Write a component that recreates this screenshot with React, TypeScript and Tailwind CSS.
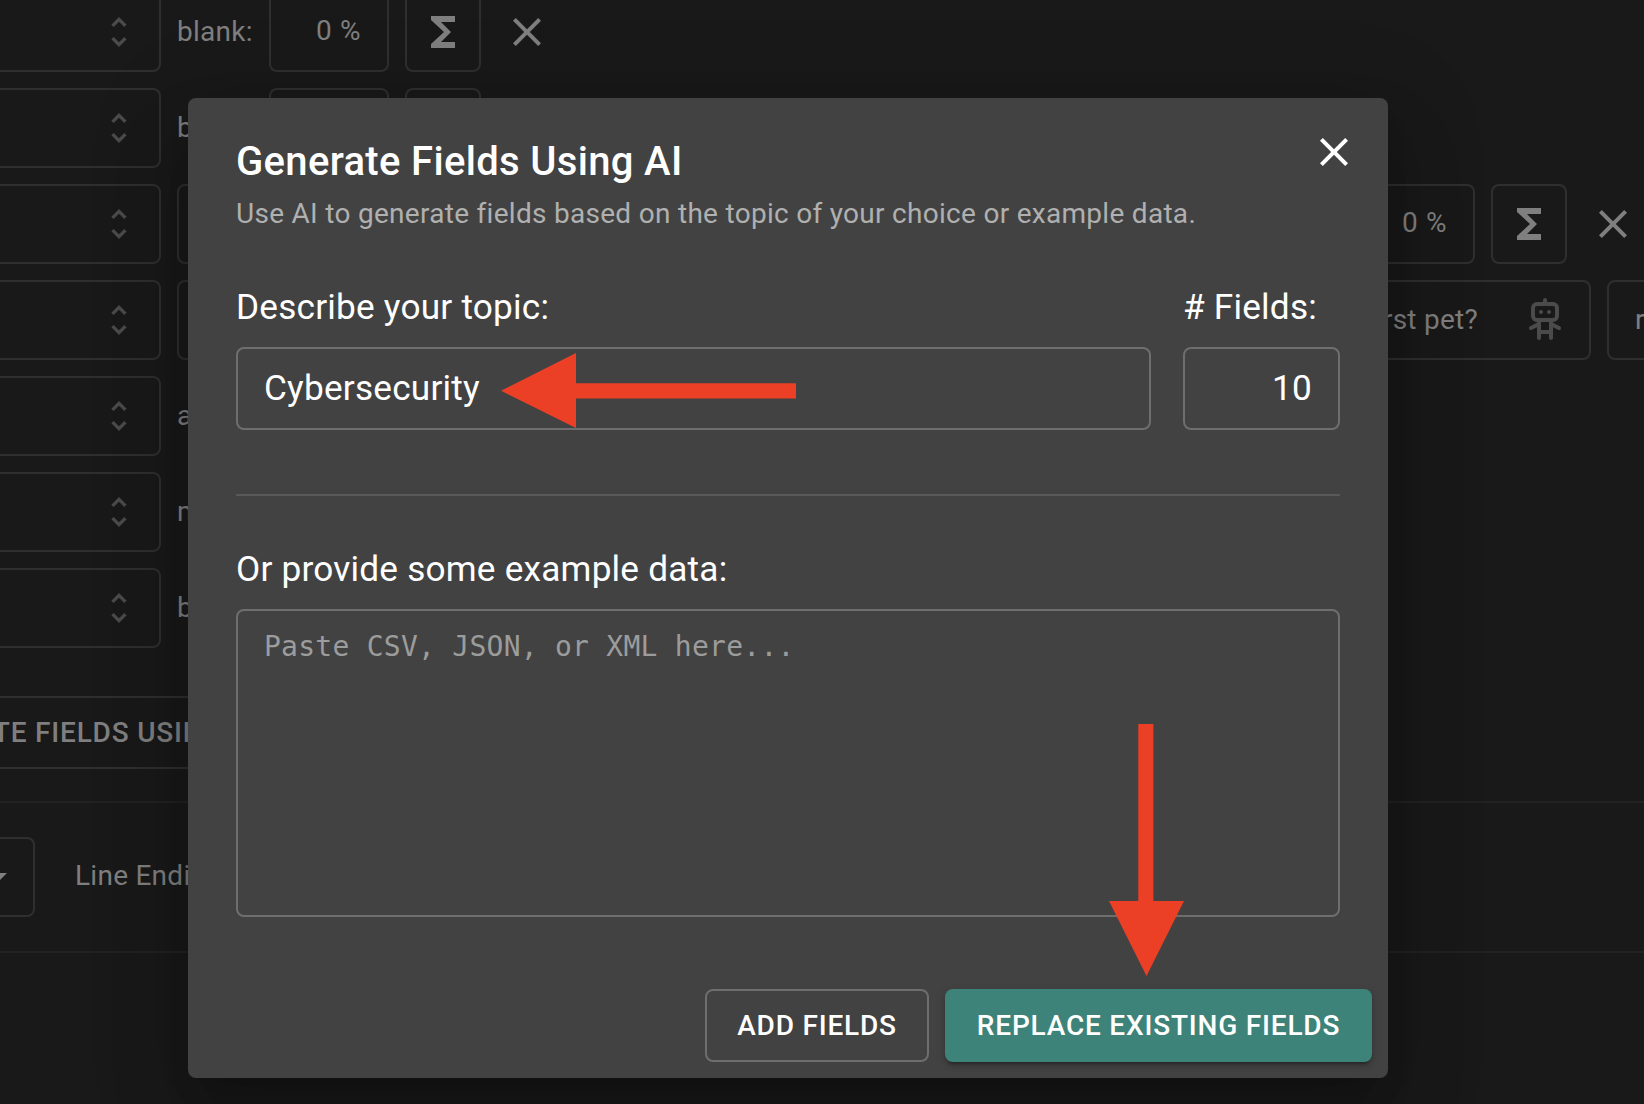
import React from "react";

const font = "font-[Roboto,sans-serif]";

function FunctionsIcon() {
  return (
    <svg viewBox="0 0 24 24" className="h-12 w-12 fill-current">
      <path d="M18 4H6v2l6.5 6L6 18v2h12v-3h-7l5-5-5-5h7z" />
    </svg>
  );
}

function CloseIcon() {
  return (
    <svg viewBox="0 0 24 24" className="h-12 w-12 fill-current">
      <path d="M19 6.41 17.59 5 12 10.59 6.41 5 5 6.41 10.59 12 5 17.59 6.41 19 12 13.41 17.59 19 19 17.59 13.41 12z" />
    </svg>
  );
}

function UnfoldIcon() {
  return (
    <svg viewBox="0 0 24 24" className="h-10 w-10 fill-[#4b4b4b]">
      <path d="M12 5.83 15.17 9l1.41-1.41L12 3 7.41 7.59 8.83 9 12 5.83zm0 12.34L8.83 15l-1.41 1.41L12 21l4.59-4.59L15.17 15 12 18.17z" />
    </svg>
  );
}

function RobotIcon() {
  return (
    <svg
      viewBox="0 0 24 24"
      className="h-12 w-12 fill-none stroke-[#4b4b4b] stroke-2"
      strokeLinecap="round"
      strokeLinejoin="round"
    >
      <path d="M6 6a2 2 0 0 1 2-2h8a2 2 0 0 1 2 2v4a2 2 0 0 1-2 2H8a2 2 0 0 1-2-2z" />
      <path d="M12 2v2M9 12v9M15 12v9M5 16l4-2M15 14l4 2M9 18h6M10 8v.01M14 8v.01" />
    </svg>
  );
}

const box = "h-20 shrink-0 rounded-lg border-2 border-[#2f2f2f]";

function PercentBox() {
  return (
    <div className={`${box} flex w-[120px] items-center justify-end pr-[26px] pb-0.5 tracking-[0.6px]`}>0 %</div>
  );
}

function SigmaButton() {
  return (
    <div className={`${box} flex w-[76px] items-center justify-center`}>
      <FunctionsIcon />
    </div>
  );
}

function FieldRow({ children }: { children: React.ReactNode }) {
  return (
    <div className="flex h-20 items-center gap-4 whitespace-nowrap">
      <div className={`${box} flex w-[161px] items-center justify-end rounded-l-none border-l-0 pr-5`}>
        <UnfoldIcon />
      </div>
      {children}
    </div>
  );
}

function BlankRow() {
  return (
    <FieldRow>
      <span className="w-[76px]">blank:</span>
      <PercentBox />
      <SigmaButton />
      <div className="ml-[6px]">
        <CloseIcon />
      </div>
    </FieldRow>
  );
}

function Page() {
  return (
    <div className="flex h-full w-full flex-col overflow-hidden bg-[#191919] text-[28px] tracking-[0.26px] text-[#7f7f7f]">
      <div className="-mt-2 flex flex-col gap-4">
        <BlankRow />
        <BlankRow />
        <FieldRow>
          <div className={`${box} w-[1162px]`} />
          <PercentBox />
          <SigmaButton />
          <div className="ml-[6px]">
            <CloseIcon />
          </div>
        </FieldRow>
        <FieldRow>
          <div className={`${box} flex w-[1414px] items-center justify-between pr-5`}>
            <span className="w-[1299px] text-right">What was the name of your first pet?</span>
            <RobotIcon />
          </div>
          <div className={`${box} flex w-[300px] items-center pl-[26px]`}>random</div>
        </FieldRow>
        <FieldRow>
          <span>at least</span>
        </FieldRow>
        <FieldRow>
          <span>min:</span>
        </FieldRow>
        <FieldRow>
          <span>between</span>
        </FieldRow>
      </div>
      <div className="mt-12 flex h-[73px] w-[560px] shrink-0 items-center border-y-2 border-[#2f2f2f] font-medium tracking-[0.8px] whitespace-nowrap">
        <span className="-ml-[117px]">GENERATE FIELDS USING AI...</span>
      </div>
      <div className="mt-8 flex h-[152px] shrink-0 items-center gap-10 border-y-2 border-[#222222]">
        <div className={`${box} flex w-[35px] items-center rounded-l-none border-l-0`}>
          <svg viewBox="0 0 24 24" className="-ml-[27px] h-12 w-12 shrink-0 fill-current">
            <path d="M7 10l5 5 5-5z" />
          </svg>
        </div>
        <span className="pb-0.5 whitespace-nowrap">Line Ending:</span>
      </div>
    </div>
  );
}

function Dialog() {
  return (
    <div className="absolute top-[98px] left-[188px] flex h-[980px] w-[1200px] flex-col rounded-lg bg-[#424242] px-12 pt-[39px] pb-4 text-white shadow-[0_22px_30px_-14px_rgba(0,0,0,0.2),0_48px_76px_6px_rgba(0,0,0,0.14),0_18px_92px_16px_rgba(0,0,0,0.12)]">
      <div className="flex h-[93px] justify-between">
        <div>
          <h1 className="text-[40px] leading-[50px] font-medium tracking-[0.33px]">Generate Fields Using AI</h1>
          <p className="mt-1.5 text-[28px] leading-[42px] tracking-[0.29px] text-[#b0b0b0]">
            Use AI to generate fields based on the topic of your choice or example data.
          </p>
        </div>
        <button className="-mt-[9px] -mr-[18px] h-12 w-12">
          <CloseIcon />
        </button>
      </div>

      <div className="mt-[52px] flex gap-8 text-[35.2px] tracking-[0.21px]">
        <label className="flex w-[915px] flex-col">
          <span className="leading-[50px]">Describe your topic:</span>
          <span className="mt-[15px] flex h-[83px] items-center rounded-lg border-2 border-[#6e6e6e] pl-[26px]">
            Cybersecurity
          </span>
        </label>
        <label className="flex w-[157px] flex-col">
          <span className="leading-[50px]"># Fields:</span>
          <span className="mt-[15px] flex h-[83px] items-center justify-end rounded-lg border-2 border-[#6e6e6e] pr-[26px]">
            10
          </span>
        </label>
      </div>

      <div className="mt-16 h-0.5 shrink-0 bg-[#595959]" />

      <div className="mt-12 text-[35.2px] leading-[50px] tracking-[0.21px]">Or provide some example data:</div>
      <div className="mt-[15px] h-[308px] shrink-0 rounded-lg border-2 border-[#6e6e6e] px-[26px] pt-[17px] font-['DejaVu_Sans_Mono',monospace] text-[28px] leading-[38px] tracking-[0.26px] text-[#9c9c9c]">
        Paste CSV, JSON, or XML here...
      </div>

      <div className="mt-auto -mr-8 flex justify-end gap-4 text-[28px] font-medium tracking-[0.8px]">
        <button className="flex h-[73px] w-[224px] items-center justify-center rounded-lg border-2 border-[#6e6e6e]">
          ADD FIELDS
        </button>
        <button className="flex h-[73px] w-[427px] items-center justify-center rounded-lg bg-[#3e8379] shadow-[0_6px_2px_-4px_rgba(0,0,0,0.2),0_4px_4px_0_rgba(0,0,0,0.14),0_2px_10px_0_rgba(0,0,0,0.12)]">
          REPLACE EXISTING FIELDS
        </button>
      </div>
    </div>
  );
}

export default function App() {
  return (
    <div className={`${font} relative h-[1104px] w-[1644px] overflow-hidden`}>
      <Page />
      <Dialog />
      <svg viewBox="0 0 295 75" className="absolute top-[353px] left-[501px] h-[75px] w-[295px] fill-[#eb4026]">
        <path d="M0 37.7 75 0V30.3H295V45.5H75V75Z" />
      </svg>
      <svg viewBox="0 0 75 252" className="absolute top-[724px] left-[1109px] h-[252px] w-[75px] fill-[#eb4026]">
        <path d="M29.3 0H44.4V177H75L37.5 252 0 177H29.3Z" />
      </svg>
    </div>
  );
}
